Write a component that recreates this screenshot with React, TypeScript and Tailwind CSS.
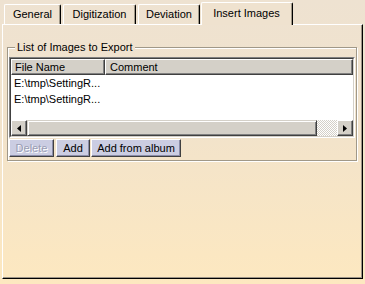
import React from "react";

function Tab({ label, w, ml, selected }: { label: string; w: string; ml: string; selected?: boolean }) {
  if (selected) {
    return (
      <div
        className={`${w} ${ml} relative z-10 -mb-[1px] flex h-[23px] items-start justify-center rounded-t-[2px] border-l border-t border-r border-l-white border-t-white border-r-black bg-[#efe2cf] pt-[4px] shadow-[inset_-1px_0_0_#a09888]`}
      >
        <span className="pr-[1px]">{label}</span>
      </div>
    );
  }
  return (
    <div
      className={`${w} ${ml} flex h-[20px] items-start justify-center rounded-t-[2px] border-l border-t border-r border-l-white border-t-white border-r-black pt-[3px] shadow-[inset_-1px_0_0_#a09888]`}
    >
      <span>{label}</span>
    </div>
  );
}

function Arrow({ dir }: { dir: "left" | "right" }) {
  return (
    <div className="flex h-[16px] w-[16px] shrink-0 items-center justify-center border border-l-white border-t-white border-r-[#404040] border-b-[#404040] bg-[#d4d0c8] shadow-[inset_-1px_-1px_0_#808080]">
      <svg width="4" height="7" viewBox="0 0 4 7">
        {dir === "left" ? <polygon points="4,0 4,7 0,3.5" fill="#000" /> : <polygon points="0,0 0,7 4,3.5" fill="#000" />}
      </svg>
    </div>
  );
}

function Btn({ label, w, ml, disabled }: { label: string; w: string; ml: string; disabled?: boolean }) {
  return (
    <div
      className={`${w} ${ml} flex h-[18px] items-center justify-center border border-l-white border-t-white border-r-[#404040] border-b-[#404040] bg-[#cbcde2] shadow-[inset_-1px_-1px_0_#8a8ca8]`}
    >
      {disabled ? (
        <span className="text-[#9a9db4] [text-shadow:1px_1px_0_#ffffff]">{label}</span>
      ) : (
        <span>{label}</span>
      )}
    </div>
  );
}

export default function App() {
  return (
    <div className="h-[284px] w-[365px] overflow-hidden bg-[linear-gradient(180deg,#eee2d1_0%,#f2e3cb_45%,#fde8c0_100%)] px-[2px] pt-[2px] font-['Liberation_Sans',Arial,sans-serif] text-[11px] leading-[13px] text-black">
      {/* Tabs */}
      <div className="flex h-[22px] items-end">
        <Tab label="General" w="w-[57px]" ml="ml-[2px]" />
        <Tab label="Digitization" w="w-[73px]" ml="ml-[2px]" />
        <Tab label="Deviation" w="w-[62px]" ml="ml-[2px]" />
        <Tab label="Insert Images" w="w-[92px]" ml="ml-[1px]" selected />
      </div>
      {/* Panel */}
      <div className="h-[255px] w-[361px] border border-l-white border-t-white border-r-black border-b-black shadow-[inset_-1px_-1px_0_#9c9486]">
        {/* Group box */}
        <div className="relative ml-[4px] mt-[22px] h-[114px] w-[350px] border border-[#a09888] shadow-[inset_1px_1px_0_#ffffff,1px_1px_0_#ffffff]">
          <div className="absolute -top-[7px] left-[7px] bg-[#efe2cf] px-[2px]">List of Images to Export</div>
          {/* List */}
          <div className="ml-[1px] mt-[9px] w-[346px] border border-l-[#808080] border-t-[#808080] border-r-white border-b-white">
            <div className="border border-l-[#404040] border-t-[#404040] border-r-[#d4d0c8] border-b-[#d4d0c8] bg-white">
              {/* Header */}
              <div className="flex h-[16px] bg-[#d4d0c8]">
                <div className="flex w-[94px] items-center border border-l-white border-t-white border-r-[#404040] border-b-[#404040] pl-[3px] shadow-[inset_-1px_-1px_0_#808080]">
                  File Name
                </div>
                <div className="flex flex-1 items-center border border-l-white border-t-white border-r-[#404040] border-b-[#404040] pl-[4px] shadow-[inset_-1px_-1px_0_#808080]">
                  Comment
                </div>
              </div>
              {/* Rows */}
              <div className="h-[45px] pl-[3px]">
                <div className="flex h-[16px] items-center">E:\tmp\SettingR...</div>
                <div className="flex h-[16px] items-center">E:\tmp\SettingR...</div>
              </div>
              {/* Scrollbar */}
              <div className="flex h-[16px] bg-[#d4d0c8]">
                <Arrow dir="left" />
                <div className="h-[16px] w-[290px] border border-l-[#d4d0c8] border-t-[#d4d0c8] border-r-[#404040] border-b-[#404040] bg-[#d4d0c8] shadow-[inset_1px_1px_0_#ffffff,inset_-1px_-1px_0_#808080]" />
                <div className="h-[16px] flex-1 bg-[repeating-conic-gradient(#d4d0c8_0%_25%,#ffffff_0%_50%)] bg-[length:2px_2px]" />
                <Arrow dir="right" />
              </div>
            </div>
          </div>
          {/* Buttons */}
          <div className="ml-[1px] mt-[1px] flex">
            <Btn label="Delete" w="w-[45px]" ml="ml-0" disabled />
            <Btn label="Add" w="w-[34px]" ml="ml-[2px]" />
            <Btn label="Add from album" w="w-[90px]" ml="ml-[1px]" />
          </div>
        </div>
      </div>
    </div>
  );
}
